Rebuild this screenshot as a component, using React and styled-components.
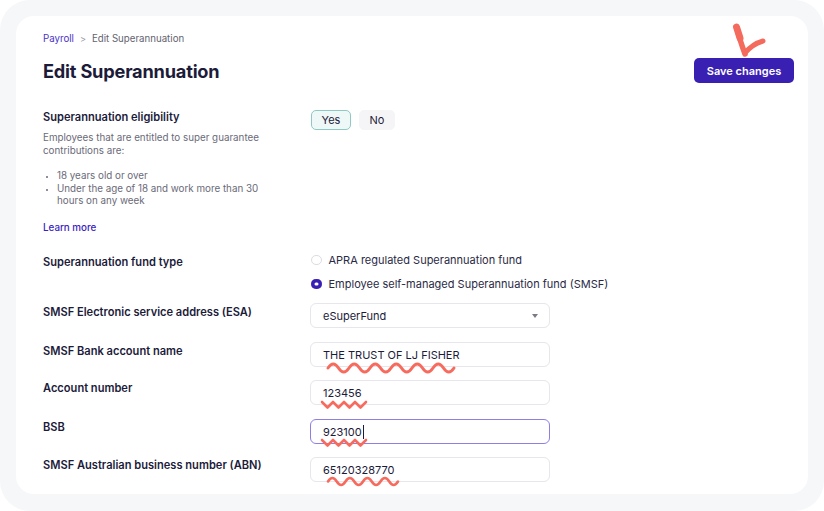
import React from "react";
import styled, { createGlobalStyle, css } from "styled-components";

const GlobalStyle = createGlobalStyle`
  * { box-sizing: border-box; }
  body {
    margin: 0;
    background: #ffffff;
    font-family: Inter, "Noto Sans", "Liberation Sans", sans-serif;
    color: #1c1b3a;
  }
`;

const Frame = styled.div`
  height: 511px;
  padding: 16px 16px 17px 16px;
  background: #f6f7f9;
  border-radius: 30px;
`;

const Card = styled.div`
  position: relative;
  height: 100%;
  background: #fff;
  border-radius: 18px;
  padding: 16px 14px 0 27px;
  overflow: hidden;
`;

const Header = styled.div`
  display: flex;
  justify-content: space-between;
  align-items: flex-end;
`;

const Crumbs = styled.div`
  display: flex;
  align-items: center;
  gap: 6px;
  font-size: 9.7px;
  line-height: 14px;
  color: #63636f;
  a {
    color: #4b33c6;
    text-decoration: none;
  }
  span.sep {
    color: #9a9aa6;
    font-size: 9px;
  }
`;

const Title = styled.h1`
  margin: 13px 0 0;
  font-size: 18.2px;
  line-height: 24px;
  font-weight: 700;
  letter-spacing: -0.2px;
  color: #1c1b3a;
`;

const SaveButton = styled.button`
  position: relative;
  height: 25px;
  width: 100px;
  border: 0;
  border-radius: 5px;
  background: #3a1fb3;
  color: #fff;
  font-family: inherit;
  font-size: 11px;
  font-weight: 600;
  cursor: pointer;
`;

const Form = styled.div`
  display: flex;
  flex-direction: column;
  margin-top: 27px;
`;

const Row = styled.div`
  display: grid;
  grid-template-columns: 267px 240px;
  margin-top: ${(p) => p.$gap || 0}px;
`;

const Label = styled.div`
  font-size: 11.1px;
  line-height: 14px;
  font-weight: 600;
  color: #1c1b3a;
  padding-top: ${(p) => p.$pad || 0}px;
`;

const Help = styled.p`
  margin: 8px 0 0;
  width: 228px;
  font-size: 9.8px;
  line-height: 12.5px;
  color: #6a6a78;
`;

const Bullets = styled.ul`
  margin: 13px 0 0;
  padding: 0 0 0 14px;
  width: 228px;
  font-size: 9.8px;
  line-height: 12.5px;
  color: #6a6a78;
  li::marker { font-size: 7px; }
`;

const LearnMore = styled.a`
  display: block;
  margin-top: 14px;
  font-size: 9.8px;
  line-height: 12.5px;
  font-weight: 500;
  color: #3a22c0;
  text-decoration: none;
`;

const Toggle = styled.div`
  display: flex;
  gap: 8px;
  align-items: flex-start;
  padding-left: 1px;
`;

const ToggleButton = styled.button`
  height: 20px;
  padding: 0;
  width: ${(p) => p.$w}px;
  border-radius: 5px;
  font-family: inherit;
  font-size: 11px;
  color: #1c1b3a;
  ${(p) =>
    p.$active
      ? css`
          background: #eef8f7;
          border: 1.5px solid #8fc9c4;
        `
      : css`
          background: #f5f5f8;
          border: 1.5px solid #f5f5f8;
        `}
`;

const Options = styled.div`
  display: flex;
  flex-direction: column;
  gap: 10px;
`;

const Option = styled.label`
  display: flex;
  align-items: center;
  gap: 7px;
  font-size: 11px;
  line-height: 14px;
  color: #2b2a45;
  white-space: nowrap;
`;

const Radio = styled.span`
  width: 10.5px;
  height: 10.5px;
  margin-left: 1px;
  border-radius: 50%;
  flex-shrink: 0;
  ${(p) =>
    p.$checked
      ? css`
          background: #3a1fb3;
          border: 0;
          box-shadow: inset 0 0 0 3.5px #3a1fb3, inset 0 0 0 6px #fff;
        `
      : css`
          background: #fff;
          border: 1px solid #dcdce3;
        `}
`;

const Field = styled.div`
  position: relative;
  height: 25px;
  border: 1px solid ${(p) => (p.$focus ? "#8d80e4" : "#e6e6ec")};
  border-radius: 6px;
  display: flex;
  align-items: center;
  padding: 0 12px;
  font-size: 11px;
  color: #1c1b3a;
`;

const Caret = styled.span`
  display: inline-block;
  width: 1px;
  height: 14px;
  margin-left: 1px;
  background: #1c1b3a;
`;

const Arrow = styled.span`
  margin-left: auto;
  margin-right: -1px;
  width: 0;
  height: 0;
  border-left: 3.5px solid transparent;
  border-right: 3.5px solid transparent;
  border-top: 4px solid #7b7b88;
`;

const Squiggle = styled.svg`
  position: absolute;
  left: ${(p) => p.$x}px;
  top: ${(p) => p.$y}px;
  overflow: visible;
  pointer-events: none;
`;

const Tick = styled.svg`
  position: absolute;
  left: 42px;
  top: -32px;
  overflow: visible;
  pointer-events: none;
`;

const wave = (width, period, amp) => {
  let d = `M0 ${amp}`;
  for (let x = 0; x < width; x += period) {
    d += ` Q${x + period / 4} ${-amp} ${x + period / 2} ${amp} T${x + period} ${amp}`;
  }
  return d;
};

const zigzag = (width, period, amp) => {
  let d = `M0 0`;
  for (let x = 0; x < width; x += period) {
    d += ` L${x + period / 2} ${amp} L${x + period} 0`;
  }
  return d;
};

function Mark({ x, y, w, h, d, stroke = 2.6 }) {
  return (
    <Squiggle $x={x} $y={y} width={w} height={h}>
      <path d={d} fill="none" stroke="#f66b5d" strokeWidth={stroke} strokeLinecap="round" strokeLinejoin="round" />
    </Squiggle>
  );
}

export default function App() {
  return (
    <>
      <GlobalStyle />
      <Frame>
        <Card>
          <Header>
            <div>
              <Crumbs>
                <a href="#">Payroll</a>
                <span className="sep">&gt;</span>
                <span>Edit Superannuation</span>
              </Crumbs>
              <Title>Edit Superannuation</Title>
            </div>
            <SaveButton>
              Save changes
              <Tick width="30" height="32">
                <path d="M1 2 C3 11 6 20 9 28" fill="none" stroke="#f46a5c" strokeWidth="5.5" strokeLinecap="round" />
                <path d="M0.5 1 L4 12" fill="none" stroke="#f46a5c" strokeWidth="7" strokeLinecap="round" />
                <path d="M9 27 C14 21 20 17 27 15" fill="none" stroke="#f46a5c" strokeWidth="5" strokeLinecap="round" />
              </Tick>
            </SaveButton>
          </Header>

          <Form>
            <Row>
              <div>
                <Label>Superannuation eligibility</Label>
                <Help>Employees that are entitled to super guarantee contributions are:</Help>
                <Bullets>
                  <li>18 years old or over</li>
                  <li>Under the age of 18 and work more than 30 hours on any week</li>
                </Bullets>
                <LearnMore href="#">Learn more</LearnMore>
              </div>
              <Toggle>
                <ToggleButton $active $w={40}>Yes</ToggleButton>
                <ToggleButton $w={36}>No</ToggleButton>
              </Toggle>
            </Row>

            <Row $gap={19}>
              <Label $pad={2}>Superannuation fund type</Label>
              <Options>
                <Option>
                  <Radio />
                  APRA regulated Superannuation fund
                </Option>
                <Option>
                  <Radio $checked />
                  Employee self-managed Superannuation fund (SMSF)
                </Option>
              </Options>
            </Row>

            <Row $gap={12}>
              <Label $pad={1.5}>SMSF Electronic service address (ESA)</Label>
              <Field>
                eSuperFund
                <Arrow />
              </Field>
            </Row>

            <Row $gap={14}>
              <Label $pad={1.5}>SMSF Bank account name</Label>
              <Field>
                THE TRUST OF LJ FISHER
                <Mark x={17} y={21} w={128} h={10} d={wave(126, 21, 4)} stroke={3} />
              </Field>
            </Row>

            <Row $gap={13}>
              <Label $pad={1}>Account number</Label>
              <Field>
                123456
                <Mark x={11} y={21} w={46} h={8} d={zigzag(44, 11, 5.5)} />
              </Field>
            </Row>

            <Row $gap={14}>
              <Label $pad={0.5}>BSB</Label>
              <Field $focus>
                923100
                <Caret />
                <Mark x={11} y={20} w={46} h={8} d={zigzag(44, 11, 5.5)} />
              </Field>
            </Row>

            <Row $gap={13}>
              <Label $pad={0.5}>SMSF Australian business number (ABN)</Label>
              <Field>
                65120328770
                <Mark x={17} y={20} w={72} h={10} d={wave(70, 17.5, 3.5)} />
              </Field>
            </Row>
          </Form>
        </Card>
      </Frame>
    </>
  );
}
